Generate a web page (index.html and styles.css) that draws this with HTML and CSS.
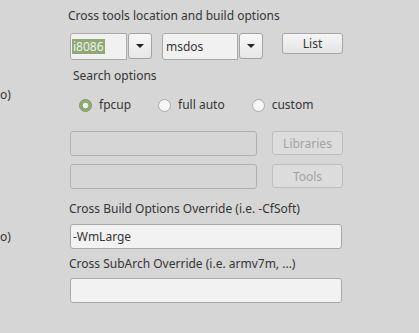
FILE: index.html
```html
<!DOCTYPE html>
<html lang="en">
	<head>
		<meta charset="UTF-8" />
		<title>Cross tools options</title>
		<link rel="stylesheet" href="styles.css">
	</head>
	<body>
		<div class="panel">
			<div class="line">
				<span class="side"></span>
				<span class="caption title">Cross tools location and build options</span>
			</div>

			<div class="line combo-row">
				<span class="side"></span>
				<div class="combo">
					<div class="combo-field cpu"><span class="selected">i8086</span></div>
					<div class="combo-btn"><span class="arrow"></span></div>
				</div>
				<div class="combo os-combo">
					<div class="combo-field os"><span>msdos</span></div>
					<div class="combo-btn"><span class="arrow"></span></div>
				</div>
				<button class="btn list-btn">List</button>
			</div>

			<div class="line search-row">
				<span class="side"></span>
				<span class="caption search-label">Search options</span>
			</div>

			<div class="line radio-row">
				<span class="side side-top">o)</span>
				<div class="radios">
					<label class="radio">
						<svg width="13" height="13" viewBox="0 0 13 13">
							<circle cx="6.5" cy="6.5" r="6" fill="#8fae72" stroke="#7a9a5e" />
							<circle cx="6.5" cy="6.5" r="3.4" fill="#eef0ea" stroke="#6f8c55" stroke-width="0.8" />
						</svg>
						<span>fpcup</span>
					</label>
					<label class="radio">
						<svg width="13" height="13" viewBox="0 0 13 13">
							<circle cx="6.5" cy="6.5" r="6" fill="#f6f6f6" stroke="#a9a9a9" />
						</svg>
						<span>full auto</span>
					</label>
					<label class="radio">
						<svg width="13" height="13" viewBox="0 0 13 13">
							<circle cx="6.5" cy="6.5" r="6" fill="#f6f6f6" stroke="#a9a9a9" />
						</svg>
						<span>custom</span>
					</label>
				</div>
			</div>

			<div class="line path-row">
				<span class="side"></span>
				<div class="field path-field disabled"></div>
				<button class="btn side-btn" disabled>Libraries</button>
			</div>

			<div class="line path-row tools-row">
				<span class="side"></span>
				<div class="field path-field disabled"></div>
				<button class="btn side-btn" disabled>Tools</button>
			</div>

			<div class="line label-row">
				<span class="side"></span>
				<span class="caption">Cross Build Options Override (i.e. -CfSoft)</span>
			</div>

			<div class="line input-row">
				<span class="side">o)</span>
				<div class="field wide-field">-WmLarge</div>
			</div>

			<div class="line label-row sub-label">
				<span class="side"></span>
				<span class="caption">Cross SubArch Override (i.e. armv7m, ...)</span>
			</div>

			<div class="line input-row sub-input">
				<span class="side"></span>
				<div class="field wide-field"></div>
			</div>
		</div>
	</body>
</html>
```

FILE: styles.css
```css
body {
	margin: 0;
	background: #d6d6d6;
	font-family: 'Noto Sans', 'Open Sans', sans-serif;
	font-size: 12px;
	color: #353535;
}
.panel {
	width: 419px;
	height: 333px;
	padding-top: 8px;
	box-sizing: border-box;
	overflow: hidden;
}
.line {
	display: flex;
	align-items: center;
}
.side {
	width: 70px;
	flex: none;
	line-height: 16px;
	white-space: nowrap;
}
.side-top {
	align-self: flex-start;
	margin-top: -8px;
}
.caption {
	line-height: 16px;
	white-space: nowrap;
}
.title {
	margin-left: -2px;
}

/* combo boxes */
.combo-row {
	margin-top: 9px;
	align-items: flex-start;
}
.combo {
	display: flex;
}
.os-combo {
	margin-left: 10px;
}
.combo-field {
	height: 27px;
	box-sizing: border-box;
	border: 1px solid #a9a9a9;
	border-radius: 3px 0 0 3px;
	background: #f1f1f1;
	padding-left: 1px;
	display: flex;
	align-items: center;
}
.combo-field.cpu {
	width: 57px;
}
.combo-field.os {
	width: 76px;
	padding-left: 3px;
}
.selected {
	background: #8fa876;
	color: #eef3e8;
	padding: 0 1px;
	line-height: 15px;
}
.combo-btn {
	width: 24px;
	height: 26px;
	margin-left: 1px;
	box-sizing: border-box;
	border: 1px solid #a3a3a3;
	border-radius: 3px;
	background: linear-gradient(#f8f8f8, #e6e6e6);
	display: flex;
	align-items: center;
	justify-content: center;
}
.arrow {
	width: 0;
	height: 0;
	border-left: 4px solid transparent;
	border-right: 4px solid transparent;
	border-top: 4px solid #222;
}

/* buttons */
.btn {
	font-family: inherit;
	font-size: 12px;
	color: #353535;
	box-sizing: border-box;
	border: 1px solid #a6a6a6;
	border-radius: 3px;
	background: linear-gradient(#f6f6f6, #e4e4e4);
	padding: 0;
}
.list-btn {
	width: 61px;
	height: 21px;
	margin-left: 19px;
}
.side-btn {
	width: 71px;
	height: 24px;
	margin-left: 15px;
	align-self: flex-start;
}
.btn:disabled {
	color: #a2a2a2;
	border-color: #bdbdbd;
	background: #dcdcdc;
}

/* search options */
.search-row {
	margin-top: 8px;
}
.search-label {
	margin-left: 3px;
}
.radio-row {
	margin-top: 11px;
	height: 20px;
}
.radios {
	display: flex;
	margin-left: 9px;
}
.radio {
	display: flex;
	align-items: center;
	gap: 7px;
	margin-right: 27px;
	line-height: 16px;
}
.radio svg {
	display: block;
}

/* text fields */
.field {
	height: 25px;
	box-sizing: border-box;
	border: 1px solid #a8a8a8;
	border-radius: 3px;
	background: #f2f2f2;
	padding-left: 2px;
	display: flex;
	align-items: center;
	white-space: nowrap;
}
.field.disabled {
	background: #d6d6d6;
	border-color: #b0b0b0;
}
.path-row {
	margin-top: 16px;
	align-items: flex-start;
}
.tools-row {
	margin-top: 8px;
}
.path-field {
	width: 187px;
}
.wide-field {
	width: 272px;
}
.label-row {
	margin-top: 12px;
}
.label-row .caption {
	margin-left: -1px;
}
.input-row {
	margin-top: 7px;
}
.sub-label {
	margin-top: 7px;
}
.sub-input {
	margin-top: 6px;
}
```
